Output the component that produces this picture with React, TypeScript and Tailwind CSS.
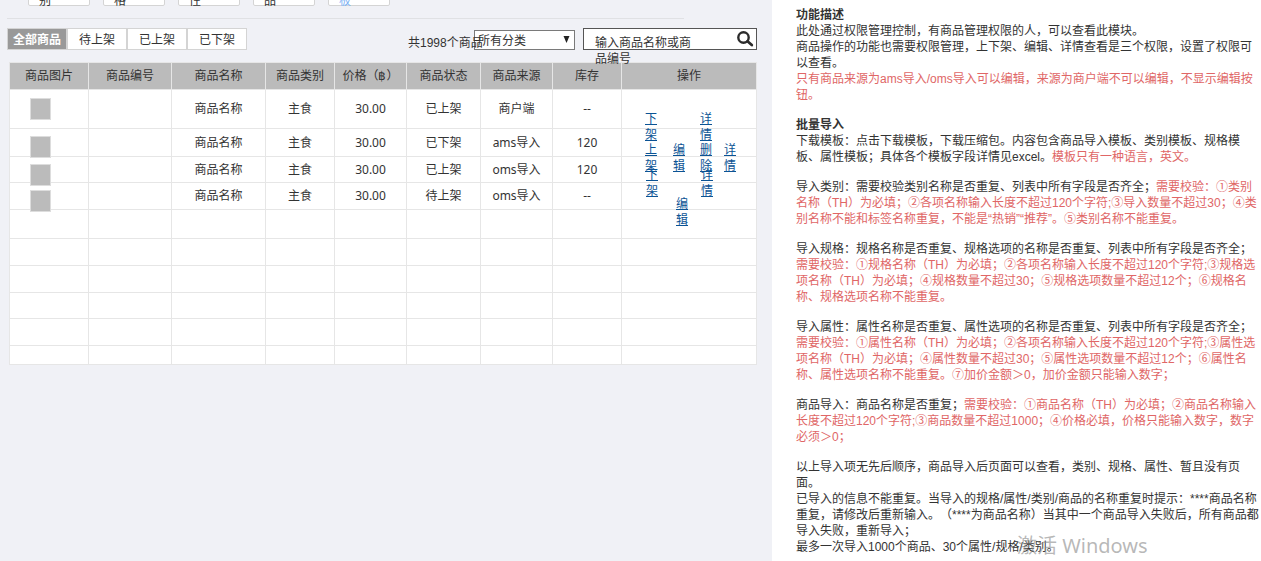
import React from "react";

const tabs = ["全部商品", "待上架", "已上架", "已下架"];

const filters = [
  { label: "类别", blue: false },
  { label: "规格", blue: false },
  { label: "属性", blue: false },
  { label: "商品", blue: false },
  { label: "模板", blue: true },
];

const columns = ["商品图片", "商品编号", "商品名称", "商品类别", "价格（฿）", "商品状态", "商品来源", "库存", "操作"];

const columnWidths = [
  "w-[79px]", "w-[83px]", "w-[94px]", "w-[69px]", "w-[72px]", "w-[74px]", "w-[72px]", "w-[69px]", "w-[135px]",
];

type Action = { label: string; place: string };
type Row = { height: string; status: string; source: string; stock: string; actions: Action[] };

const rows: Row[] = [
  {
    height: "h-[39px]", status: "已上架", source: "商户端", stock: "--",
    actions: [
      { label: "下架", place: "left-[23px] top-[21px]" },
      { label: "详情", place: "left-[78px] top-[21px]" },
    ],
  },
  {
    height: "h-[28px]", status: "已下架", source: "ams导入", stock: "120",
    actions: [
      { label: "上架", place: "left-[23px] top-[13px]" },
      { label: "编辑", place: "left-[51px] top-[13px]" },
      { label: "删除", place: "left-[78px] top-[13px]" },
      { label: "详情", place: "left-[102px] top-[13px]" },
    ],
  },
  {
    height: "h-[26px]", status: "已上架", source: "oms导入", stock: "120",
    actions: [
      { label: "下架", place: "left-[24px] top-[10px]" },
      { label: "详情", place: "left-[79px] top-[10px]" },
    ],
  },
  {
    height: "h-[27px]", status: "待上架", source: "oms导入", stock: "--",
    actions: [{ label: "编辑", place: "left-[54px] top-[13px]" }],
  },
];

const emptyRows = ["h-[29px]", "h-[27px]", "h-[27px]", "h-[26px]", "h-[27px]", "h-[19px]"];

const cell = "border border-[#e6e6e6] p-0 text-center";

function Filters() {
  return (
    <div className="mr-[73px] flex h-[19px] items-start gap-[13px] border-b border-[#e0e1e4] pl-[21px]">
      {filters.map((f) => (
        <div key={f.label} className="flex h-[6px] w-[62px] items-end overflow-hidden">
          <button
            type="button"
            className={`flex h-10 w-full items-end rounded-[2px] border border-[#d4d4d4] bg-white pl-[10px] text-left ${f.blue ? "text-[#7fb3f5]" : "text-[#333333]"}`}
          >
            <span className="h-7 w-3 leading-4">{f.label}</span>
          </button>
        </div>
      ))}
    </div>
  );
}

function Toolbar() {
  return (
    <div className="mt-[9px] flex items-start">
      <div className="flex">
        {tabs.map((t, i) => (
          <button
            key={t}
            type="button"
            className={`h-[22px] w-[60px] border border-[#d4d4d4] pt-px leading-5 ${i === 0 ? "bg-[#999999] font-bold text-white" : "bg-white text-[#333333]"}`}
          >
            {t}
          </button>
        ))}
      </div>
      <span className="z-10 ml-auto w-[66px] pt-[6px] whitespace-nowrap">共1998个商品</span>
      <div className="relative mt-[2px] w-[101px]">
        <select
          aria-label="商品分类"
          className="h-5 w-full appearance-none border border-[#7a7a7a] bg-white pl-[3px] leading-5"
        >
          <option>所有分类</option>
        </select>
        <svg className="pointer-events-none absolute top-[6px] right-[5px] h-[7px] w-[7px]" viewBox="0 0 7 7">
          <path d="M0.5 0H6.5L3.5 7Z" fill="#222" />
        </svg>
      </div>
      <div className="relative ml-2 flex h-[22px] w-[174px] items-center justify-end border border-[#555555] bg-white pr-[2px]">
        <textarea
          aria-label="搜索商品"
          placeholder={"输入商品名称或商品编号"}
          rows={2}
          className="absolute top-[6px] left-[11px] block h-8 w-[100px] resize-none overflow-hidden bg-transparent p-0 leading-4 placeholder:text-[#333333] placeholder:opacity-100 focus:outline-none"
        />
        <button type="button" aria-label="搜索" className="flex">
          <svg className="h-[18px] w-[18px]" viewBox="0 0 18 18" fill="none" stroke="#2b2b2b">
            <circle cx="7.5" cy="7.5" r="5.2" strokeWidth="2.4" />
            <path d="M11.5 11.3L15.8 15" strokeWidth="2.8" strokeLinecap="round" />
          </svg>
        </button>
      </div>
    </div>
  );
}

function ProductTable() {
  return (
    <table className="mt-[10px] ml-[2px] w-[748px] table-fixed border-collapse bg-white font-['Noto_Sans','Noto_Sans_CJK_SC',sans-serif] leading-4">
      <colgroup>
        {columnWidths.map((w, i) => (
          <col key={i} className={w} />
        ))}
      </colgroup>
      <thead>
        <tr className="h-[27px] bg-[#bbbbbb]">
          {columns.map((c) => (
            <th key={c} className={`${cell} font-normal whitespace-nowrap`}>{c}</th>
          ))}
        </tr>
      </thead>
      <tbody>
        {rows.map((r, i) => (
          <tr key={i} className={r.height}>
            <td className={`${cell} relative`}>
              <span className={`absolute left-5 h-[22px] w-[21px] border border-[#dddddd] bg-[#bbbbbb] ${i === 0 ? "top-2" : "top-[7px]"}`} />
            </td>
            <td className={cell} />
            <td className={cell}>商品名称</td>
            <td className={cell}>主食</td>
            <td className={cell}>30.00</td>
            <td className={cell}>{r.status}</td>
            <td className={cell}>{r.source}</td>
            <td className={cell}>{r.stock}</td>
            <td className={`${cell} relative`}>
              {r.actions.map((a) => (
                <a key={a.label} href="#" className={`absolute w-3 leading-4 text-[#0b5394] underline ${a.place}`}>
                  {a.label}
                </a>
              ))}
            </td>
          </tr>
        ))}
        {emptyRows.map((h, i) => (
          <tr key={i} className={h}>
            {columns.map((c) => (
              <td key={c} className={cell} />
            ))}
          </tr>
        ))}
      </tbody>
    </table>
  );
}

function Red({ children }: { children: React.ReactNode }) {
  return <span className="text-[#e06666]">{children}</span>;
}

function Notes() {
  return (
    <div className="flex flex-col gap-[14px] leading-4 [text-spacing-trim:space-all]">
      <section>
        <h2 className="font-bold">功能描述</h2>
        <p>此处通过权限管理控制，有商品管理权限的人，可以查看此模块。</p>
        <p>商品操作的功能也需要权限管理，上下架、编辑、详情查看是三个权限，设置了权限可以查看。</p>
        <p><Red>只有商品来源为ams导入/oms导入可以编辑，来源为商户端不可以编辑，不显示编辑按钮。</Red></p>
      </section>
      <section>
        <h2 className="font-bold">批量导入</h2>
        <p>下载模板：点击下载模板，下载压缩包。内容包含商品导入模板、类别模板、规格模板、属性模板；具体各个模板字段详情见excel。<Red>模板只有一种语言，英文。</Red></p>
      </section>
      <p>导入类别：需要校验类别名称是否重复、列表中所有字段是否齐全；<Red>需要校验：①类别名称（TH）为必填；②各项名称输入长度不超过120个字符;③导入数量不超过30；④类别名称不能和标签名称重复，不能是“热销”“推荐”。⑤类别名称不能重复。</Red></p>
      <p>导入规格：规格名称是否重复、规格选项的名称是否重复、列表中所有字段是否齐全；<Red>需要校验：①规格名称（TH）为必填；②各项名称输入长度不超过120个字符;③规格选项名称（TH）为必填；④规格数量不超过30；⑤规格选项数量不超过12个；⑥规格名称、规格选项名称不能重复。</Red></p>
      <p>导入属性：属性名称是否重复、属性选项的名称是否重复、列表中所有字段是否齐全；<Red>需要校验：①属性名称（TH）为必填；②各项名称输入长度不超过120个字符;③属性选项名称（TH）为必填；④属性数量不超过30；⑤属性选项数量不超过12个；⑥属性名称、属性选项名称不能重复。⑦加价金额＞0，加价金额只能输入数字；</Red></p>
      <p>商品导入：商品名称是否重复；<Red>需要校验：①商品名称（TH）为必填；②商品名称输入长度不超过120个字符;③商品数量不超过1000；④价格必填，价格只能输入数字，数字必须＞0；</Red></p>
      <section>
        <p>以上导入项无先后顺序，商品导入后页面可以查看，类别、规格、属性、暂且没有页面。</p>
        <p>已导入的信息不能重复。当导入的规格/属性/类别/商品的名称重复时提示：****商品名称重复，请修改后重新输入。（****为商品名称）当其中一个商品导入失败后，所有商品都导入失败，重新导入；</p>
        <p>最多一次导入1000个商品、30个属性/规格/类别。</p>
      </section>
    </div>
  );
}

export default function App() {
  return (
    <div className="flex min-h-screen bg-white font-['Liberation_Sans','Noto_Sans_CJK_SC',sans-serif] text-[12px] text-[#333333]">
      <main className="w-[772px] shrink-0 bg-[#f0f1f6] pr-[15px] pl-[7px]">
        <Filters />
        <Toolbar />
        <ProductTable />
      </main>
      <aside lang="zh-CN" className="relative min-w-0 flex-1 pt-[7px] pl-6">
        <Notes />
        <div className="pointer-events-none absolute bottom-0 left-[245px] font-['Noto_Sans','Noto_Sans_CJK_SC',sans-serif] text-[20px] leading-[30px] whitespace-nowrap text-[#888888]/60">
          激活 Windows
        </div>
      </aside>
    </div>
  );
}
